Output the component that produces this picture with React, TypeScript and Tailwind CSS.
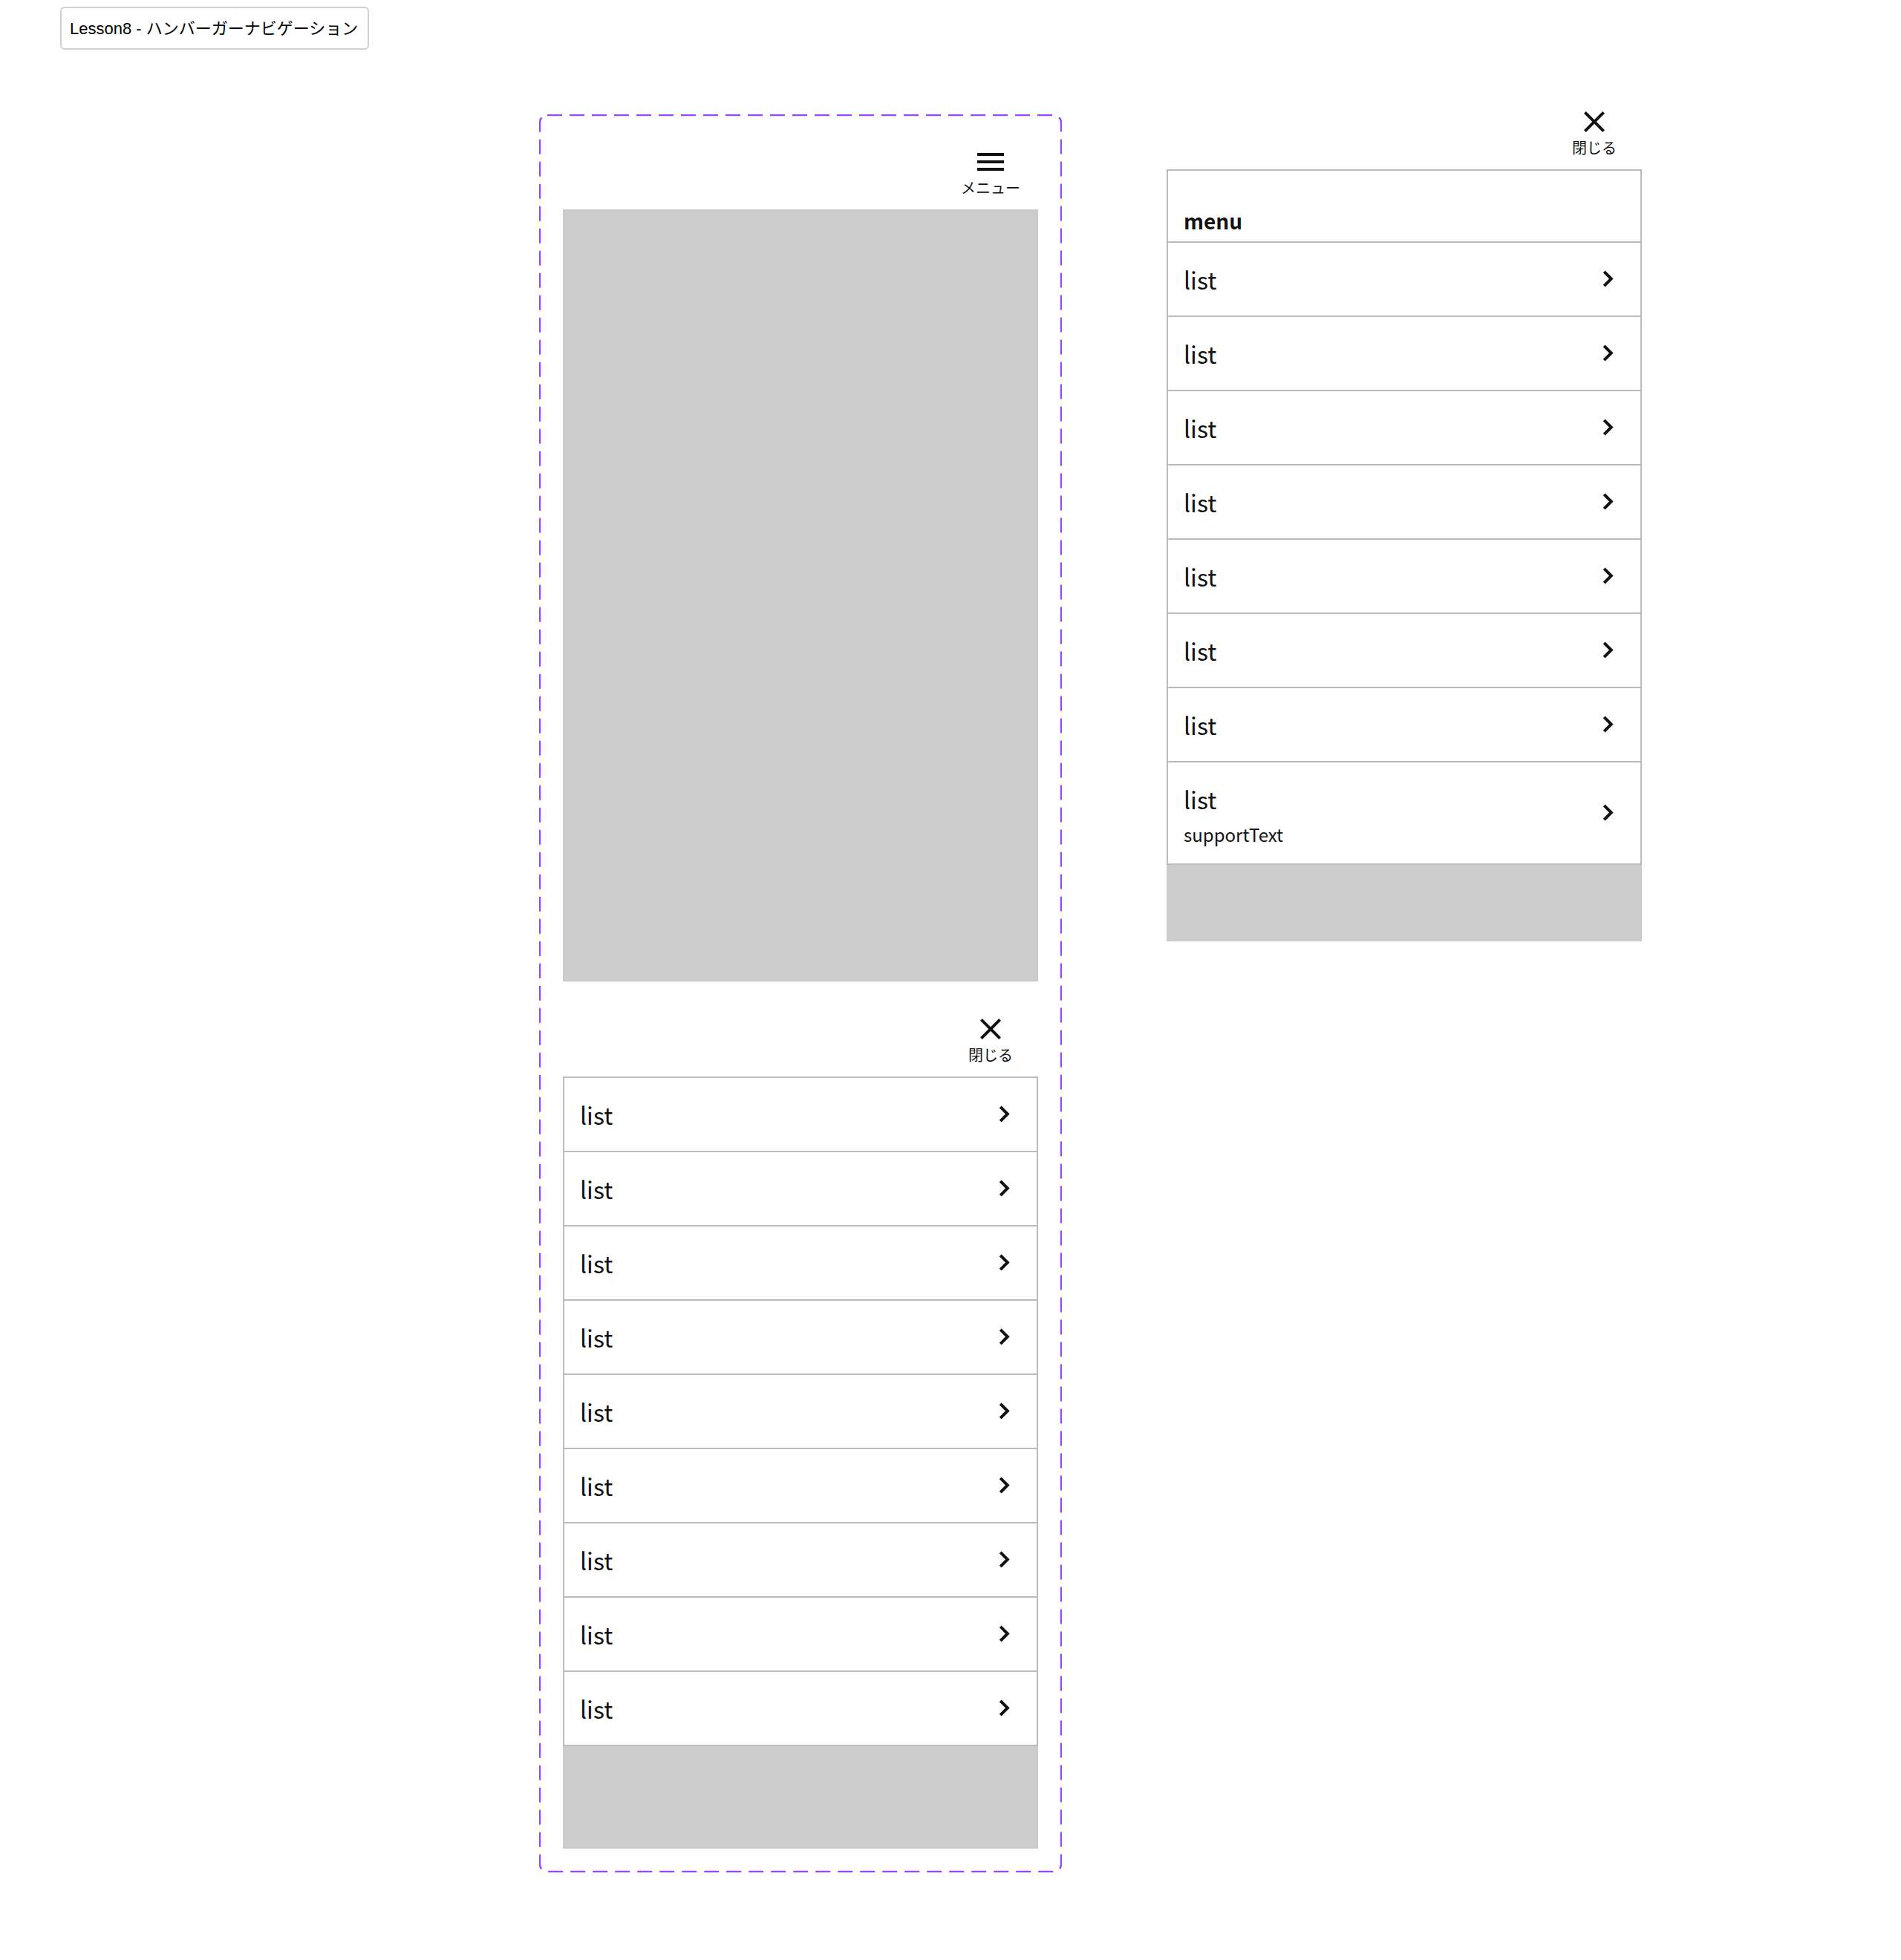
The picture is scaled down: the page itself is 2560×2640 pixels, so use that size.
import React from "react";

const FONT = { fontFamily: '"Noto Sans CJK JP", "Noto Sans", sans-serif' };

function MenuIcon() {
  return (
    <svg width="48" height="48" viewBox="0 0 24 24" fill="#111111">
      <path d="M3 18h18v-2H3v2zm0-5h18v-2H3v2zm0-7v2h18V6H3z" />
    </svg>
  );
}

function CloseIcon() {
  return (
    <svg width="48" height="48" viewBox="0 0 24 24" fill="#111111">
      <path d="M19 6.41L17.59 5 12 10.59 6.41 5 5 6.41 10.59 12 5 17.59 6.41 19 12 13.41 17.59 19 19 17.59 13.41 12z" />
    </svg>
  );
}

function ChevronRight() {
  return (
    <svg width="48" height="48" viewBox="0 0 48 48" fill="none" className="shrink-0">
      <polyline
        points="20.2,13.8 29.8,23.5 20.2,33.2"
        stroke="#111111"
        strokeWidth="4"
        strokeLinejoin="miter"
        strokeLinecap="butt"
      />
    </svg>
  );
}

function Header({ kind }: { kind: "menu" | "close" }) {
  return (
    <div className="flex h-[96px] shrink-0 justify-end pr-[16px]">
      <div className="flex w-[96px] flex-col items-center pt-[8px]">
        {kind === "menu" ? <MenuIcon /> : <CloseIcon />}
        <span className="whitespace-nowrap text-[20px] leading-[22px] text-[#111111]">
          {kind === "menu" ? "メニュー" : "閉じる"}
        </span>
      </div>
    </div>
  );
}

function Row() {
  return (
    <div className="flex h-[100px] items-center justify-between border-b-2 border-[#bbbbbb] pl-[21px] pr-[21px]">
      <span className="text-[32px] leading-[48px] text-[#111111]">list</span>
      <ChevronRight />
    </div>
  );
}

function SupportRow() {
  return (
    <div className="flex h-[138px] items-center justify-between border-b-2 border-[#bbbbbb] pl-[21px] pr-[21px]">
      <div className="flex h-full flex-col pt-[25px]">
        <span className="text-[32px] leading-[48px] text-[#111111]">list</span>
        <span className="mt-[6px] text-[24px] leading-[36px] text-[#111111]">supportText</span>
      </div>
      <ChevronRight />
    </div>
  );
}

export default function App() {
  return (
    <div className="min-h-[2640px] w-[2560px] bg-white" style={FONT}>
      <div className="pt-[9px] pl-[81px]">
        <div
          className="flex h-[58px] w-[416px] items-center rounded-[6px] border-2 border-[#d0d0d0] bg-white pl-[11px] text-[22px] text-black"
          style={{ fontFamily: '"Liberation Sans", "Noto Sans CJK JP", sans-serif' }}
        >
          Lesson8 - ハンバーガーナビゲーション
        </div>
      </div>

      <div className="mt-[65px] flex items-start">
        {/* Component set with dashed border */}
        <div className="relative ml-[726px] mt-[22px] w-[704px] p-[32px]">
          <svg
            className="pointer-events-none absolute left-0 top-0"
            width="704"
            height="2368"
            viewBox="0 0 704 2368"
          >
            <rect
              x="1"
              y="1"
              width="702"
              height="2366"
              rx="10"
              ry="10"
              fill="none"
              stroke="#9747FF"
              strokeWidth="2.4"
              strokeDasharray="20 10"
            />
          </svg>
          <div className="relative flex flex-col gap-[32px]">
            {/* Closed state */}
            <div className="flex h-[1136px] w-[640px] flex-col">
              <Header kind="menu" />
              <div className="flex-1 bg-[#cccccc]" />
            </div>
            {/* Open state */}
            <div className="flex h-[1136px] w-[640px] flex-col">
              <Header kind="close" />
              <div className="flex flex-col border-x-2 border-t-2 border-[#bbbbbb] bg-white">
                {Array.from({ length: 9 }).map((_, i) => (
                  <Row key={i} />
                ))}
              </div>
              <div className="flex-1 bg-[#cccccc]" />
            </div>
          </div>
        </div>

        {/* Open menu with heading */}
        <div className="ml-[141px] flex h-[1136px] w-[640px] flex-col">
          <Header kind="close" />
          <div className="flex flex-col border-x-2 border-t-2 border-[#bbbbbb] bg-white">
            <div className="flex h-[97px] items-end border-b-2 border-[#bbbbbb] pb-[4px] pl-[21px]">
              <span className="text-[28px] font-bold leading-[48px] text-[#111111]">menu</span>
            </div>
            {Array.from({ length: 7 }).map((_, i) => (
              <Row key={i} />
            ))}
            <SupportRow />
          </div>
          <div className="flex-1 bg-[#cccccc]" />
        </div>
      </div>
    </div>
  );
}
